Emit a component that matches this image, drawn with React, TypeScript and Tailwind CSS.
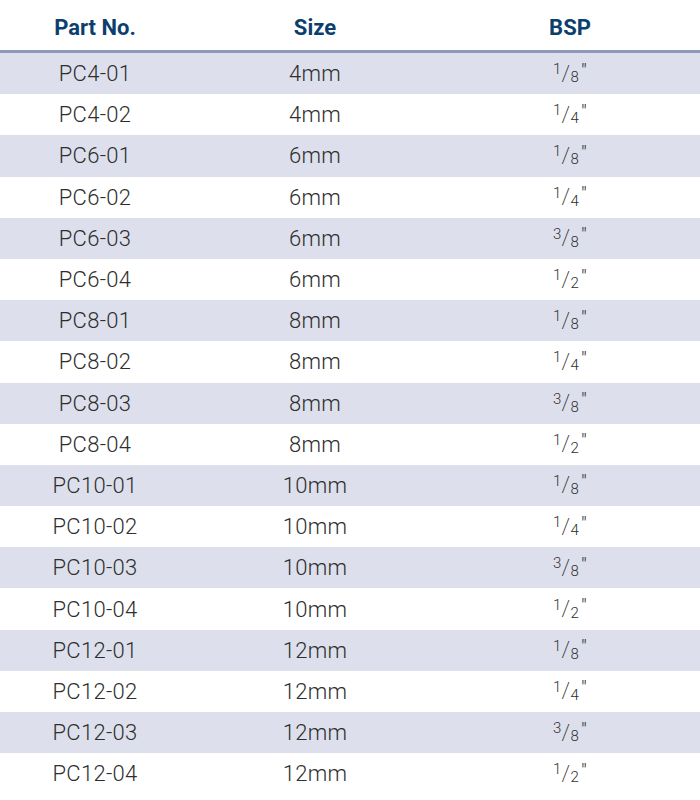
import React from 'react';

const ROWS: [string, string, [string, string]][] = [
  ['PC4-01', '4mm', ['1', '8']],
  ['PC4-02', '4mm', ['1', '4']],
  ['PC6-01', '6mm', ['1', '8']],
  ['PC6-02', '6mm', ['1', '4']],
  ['PC6-03', '6mm', ['3', '8']],
  ['PC6-04', '6mm', ['1', '2']],
  ['PC8-01', '8mm', ['1', '8']],
  ['PC8-02', '8mm', ['1', '4']],
  ['PC8-03', '8mm', ['3', '8']],
  ['PC8-04', '8mm', ['1', '2']],
  ['PC10-01', '10mm', ['1', '8']],
  ['PC10-02', '10mm', ['1', '4']],
  ['PC10-03', '10mm', ['3', '8']],
  ['PC10-04', '10mm', ['1', '2']],
  ['PC12-01', '12mm', ['1', '8']],
  ['PC12-02', '12mm', ['1', '4']],
  ['PC12-03', '12mm', ['3', '8']],
  ['PC12-04', '12mm', ['1', '2']],
];

const Fraction = ({ num, den }: { num: string; den: string }) => (
  <span className="inline-flex items-center leading-none">
    <span className="text-[15px] -translate-y-[4px]">{num}</span>
    <span className="text-[22px] font-extralight">/</span>
    <span className="text-[15px] translate-y-[4px]">{den}</span>
    <span className="text-[20px] ml-[2px] -translate-y-[3px]">″</span>
  </span>
);

const App: React.FC = () => {
  return (
    <div className="w-[700px] h-[800px] bg-white overflow-hidden font-['Roboto',sans-serif]">
      {/* header */}
      <div className="grid grid-cols-[190px_250px_260px] h-[53px] pt-1 items-center text-[22px] font-bold text-[#0d3f6e] border-b-[3px] border-[#8d99b6]">
        <div className="text-center">Part No.</div>
        <div className="text-center">Size</div>
        <div className="text-center">BSP</div>
      </div>

      {ROWS.map((row, i) => (
        <div
          key={row[0]}
          className={`grid grid-cols-[190px_250px_260px] h-[41.2px] items-center text-[22px] font-light tracking-[0.3px] text-[#2e2e2e] ${i % 2 === 0 ? 'bg-[#dde0ec]' : 'bg-white'}`}
        >
          <div className="text-center">{row[0]}</div>
          <div className="text-center">{row[1]}</div>
          <div className="flex justify-center">
            <Fraction num={row[2][0]} den={row[2][1]} />
          </div>
        </div>
      ))}
    </div>
  );
};

export default App;
